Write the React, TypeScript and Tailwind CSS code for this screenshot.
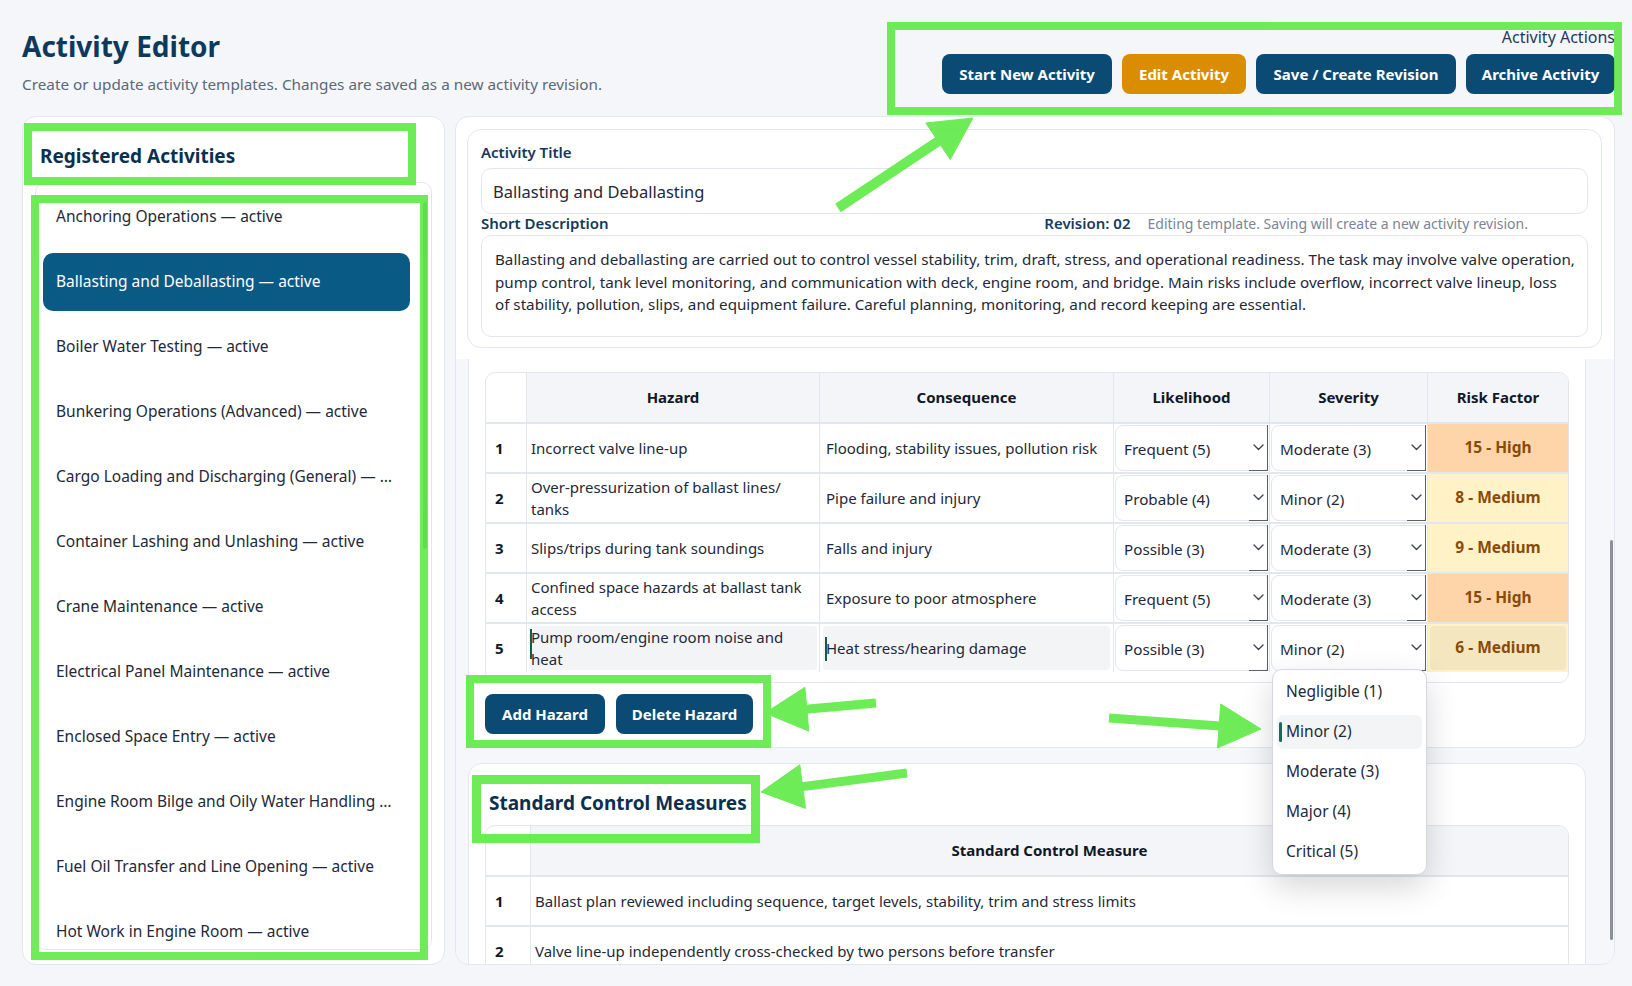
import React from 'react';

type Hazard = {
  no: number;
  hazard: string[];
  consequence: string;
  likelihood: string;
  severity: string;
  risk: string;
  level: 'high' | 'medium';
  editing?: boolean;
};

const activities = [
  'Anchoring Operations — active',
  'Ballasting and Deballasting — active',
  'Boiler Water Testing — active',
  'Bunkering Operations (Advanced) — active',
  'Cargo Loading and Discharging (General) — …',
  'Container Lashing and Unlashing — active',
  'Crane Maintenance — active',
  'Electrical Panel Maintenance — active',
  'Enclosed Space Entry — active',
  'Engine Room Bilge and Oily Water Handling …',
  'Fuel Oil Transfer and Line Opening — active',
  'Hot Work in Engine Room — active',
];

const hazards: Hazard[] = [
  { no: 1, hazard: ['Incorrect valve line-up'], consequence: 'Flooding, stability issues, pollution risk', likelihood: 'Frequent (5)', severity: 'Moderate (3)', risk: '15 - High', level: 'high' },
  { no: 2, hazard: ['Over-pressurization of ballast lines/', 'tanks'], consequence: 'Pipe failure and injury', likelihood: 'Probable (4)', severity: 'Minor (2)', risk: '8 - Medium', level: 'medium' },
  { no: 3, hazard: ['Slips/trips during tank soundings'], consequence: 'Falls and injury', likelihood: 'Possible (3)', severity: 'Moderate (3)', risk: '9 - Medium', level: 'medium' },
  { no: 4, hazard: ['Confined space hazards at ballast tank', 'access'], consequence: 'Exposure to poor atmosphere', likelihood: 'Frequent (5)', severity: 'Moderate (3)', risk: '15 - High', level: 'high' },
  { no: 5, hazard: ['Pump room/engine room noise and', 'heat'], consequence: 'Heat stress/hearing damage', likelihood: 'Possible (3)', severity: 'Minor (2)', risk: '6 - Medium', level: 'medium', editing: true },
];

const controls = [
  'Ballast plan reviewed including sequence, target levels, stability, trim and stress limits',
  'Valve line-up independently cross-checked by two persons before transfer',
];

const severityOptions = ['Negligible (1)', 'Minor (2)', 'Moderate (3)', 'Major (4)', 'Critical (5)'];

const description = [
  'Ballasting and deballasting are carried out to control vessel stability, trim, draft, stress, and operational readiness. The task may involve valve operation,',
  'pump control, tank level monitoring, and communication with deck, engine room, and bridge. Main risks include overflow, incorrect valve lineup, loss',
  'of stability, pollution, slips, and equipment failure. Careful planning, monitoring, and record keeping are essential.',
];

const Chevron = () => (
  <svg width="11" height="7" viewBox="0 0 11 7" fill="none">
    <path d="M1 1l4.5 4.5L10 1" stroke="#3f4652" strokeWidth="1.4" strokeLinecap="round" strokeLinejoin="round" />
  </svg>
);

const SelectBox = ({ value }: { value: string }) => (
  <div className="relative m-[1px] flex h-[46px] items-center rounded-l-[8px] rounded-r-[3px] border border-[#e2e6ee] bg-white pl-[8px] pt-[2px] text-[15.2px] text-[#1f2937]">
    <span>{value}</span>
    <div className="absolute bottom-[-1px] right-[-1px] flex h-[calc(100%+2px)] w-[19px] items-center justify-center border-b-[1.5px] border-r-[1.5px] border-[#5b5f66]">
      <Chevron />
    </div>
  </div>
);

const Button = ({ label, width, amber }: { label: string; width: string; amber?: boolean }) => (
  <button
    className={`${width} h-[40px] rounded-[8px] text-[15px] font-bold text-white ${amber ? 'bg-[#da8d00]' : 'bg-[#0b4a73]'}`}
  >
    {label}
  </button>
);

// annotation arrow: shaft plus a triangular head ending at (x2, y2)
const Arrow = ({ x1, y1, x2, y2, w = 9 }: { x1: number; y1: number; x2: number; y2: number; w?: number }) => {
  const dx = x2 - x1;
  const dy = y2 - y1;
  const len = Math.hypot(dx, dy);
  const ux = dx / len;
  const uy = dy / len;
  const bx = x2 - ux * 42;
  const by = y2 - uy * 42;
  const nx = -uy * 22;
  const ny = ux * 22;
  return (
    <g fill="#5fea45" stroke="#5fea45">
      <line x1={x1} y1={y1} x2={bx + ux * 4} y2={by + uy * 4} strokeWidth={w} />
      <polygon points={`${x2},${y2} ${bx + nx},${by + ny} ${bx - nx},${by - ny}`} strokeWidth={1} />
    </g>
  );
};

const cols = 'grid grid-cols-[41px_293px_294px_156px_158px_140px]';

export default function App() {
  return (
    <div className="relative h-[986px] w-[1632px] overflow-hidden bg-[#f4f6fa] font-['Noto_Sans',sans-serif] text-[#1f2937]">
      <div className="flex h-full flex-col pl-[22px] pr-[17px]">
        {/* page header */}
        <header className="flex h-[116px] shrink-0 justify-between">
          <div className="pt-[28px]">
            <h1 className="text-[28px] font-bold leading-[36px] text-[#0d3a5c]">Activity Editor</h1>
            <p className="mt-[9px] text-[15.3px] leading-[22px] text-[#5d6878]">
              Create or update activity templates. Changes are saved as a new activity revision.
            </p>
          </div>
          <div className="flex flex-col items-end pt-[27px]">
            <span className="text-[16px] leading-[20px] text-[#1e3a5f]">Activity Actions</span>
            <div className="mt-[7px] flex gap-[10px]">
              <Button label="Start New Activity" width="w-[170px]" />
              <Button label="Edit Activity" width="w-[124px]" amber />
              <Button label="Save / Create Revision" width="w-[200px]" />
              <Button label="Archive Activity" width="w-[149px]" />
            </div>
          </div>
        </header>

        <main className="flex h-[849px] gap-[10px]">
          {/* activity list */}
          <aside className="w-[423px] shrink-0 rounded-[14px] border border-[#e2e6ee] bg-white px-[12px] pt-[25px]">
            <h2 className="pl-[5px] text-[19px] font-bold leading-[28px] text-[#0c2f4e]">Registered Activities</h2>
            <div className="relative mt-[12px] h-[768px] overflow-hidden rounded-[10px] border border-[#e2e6ee] pl-[7px] pr-[21px] pt-[5px]">
              {activities.map((a, i) => (
                <div
                  key={a}
                  className={`mb-[7px] flex h-[58px] items-center overflow-hidden whitespace-nowrap rounded-[10px] px-[13px] text-[15.5px] ${
                    i === 1 ? 'bg-[#0a5a86] text-white' : 'text-[#1f2937]'
                  }`}
                >
                  {a}
                </div>
              ))}
              <div className="absolute right-[4px] top-[19px] h-[347px] w-[4px] rounded-full bg-[#6b7280]" />
            </div>
          </aside>

          {/* editor */}
          <section className="flex min-w-0 flex-1 flex-col overflow-hidden rounded-[14px] border border-[#e2e6ee] bg-white">
            <div className="ml-[11px] mr-[12px] mt-[12px] rounded-[14px] border border-[#e2e6ee] px-[13px] pb-[10px] pt-[12px]">
              <label className="block text-[15px] font-semibold leading-[20px] text-[#12385a]">Activity Title</label>
              <div className="mt-[6px] flex h-[46px] items-center rounded-[10px] border border-[#e2e6ee] px-[11px] pt-[3px] text-[16.5px] text-[#1f2937]">
                Ballasting and Deballasting
              </div>
              <div className="flex h-[18px] items-center justify-between pr-[60px]">
                <span className="text-[15px] font-semibold text-[#12385a]">Short Description</span>
                <div className="flex items-center gap-[17px]">
                  <span className="text-[15px] font-semibold text-[#1e3a5f]">Revision: 02</span>
                  <span className="text-[14px] text-[#7b8595]">Editing template. Saving will create a new activity revision.</span>
                </div>
              </div>
              <div className="mt-[3px] h-[102px] rounded-[10px] border border-[#e2e6ee] px-[13px] pt-[12px] text-[15.2px] leading-[22.5px] text-[#1f2937]">
                {description.map((l) => (
                  <div key={l} className="whitespace-nowrap">{l}</div>
                ))}
              </div>
            </div>

            <div className="relative mt-[11px] flex-1 overflow-hidden bg-[#f5f7fa] pl-[12px] pr-[28px]">
              {/* hazards */}
              <div className="rounded-b-[14px] border-x border-b border-[#e2e6ee] bg-white px-[16px] pb-[13px] pt-[13px]">
                <div className="overflow-hidden rounded-[10px] border border-[#e2e6ee] pb-[10px]">
                  <div className={`${cols} h-[49px] text-[15px] font-bold text-[#111827]`}>
                    <div className="border-r border-[#e2e6ee]" />
                    {['Hazard', 'Consequence', 'Likelihood', 'Severity', 'Risk Factor'].map((h, i) => (
                      <div
                        key={h}
                        className={`flex items-center justify-center bg-[#f3f5f9] ${i < 4 ? 'border-r border-[#e2e6ee]' : ''}`}
                      >
                        {h}
                      </div>
                    ))}
                  </div>
                  {hazards.map((h) => (
                    <div key={h.no} className={`${cols} h-[50px] border-t-2 border-[#e2e7ee] text-[15px]`}>
                      <div className="flex items-center border-r border-[#e2e6ee] pl-[9px] font-bold text-[#111827]">{h.no}</div>
                      <div className="flex items-center border-r border-[#e2e6ee] px-[2px]">
                        <div
                          className={`relative flex h-[44px] w-full flex-col justify-center rounded-[4px] pl-[2px] leading-[22px] ${
                            h.editing ? 'bg-[#f3f4f6]' : ''
                          }`}
                        >
                          {h.editing && <span className="absolute left-[1px] top-[3px] h-[30px] w-[2px] bg-[#0d5e4f]" />}
                          {h.hazard.map((t) => (
                            <span key={t} className="whitespace-nowrap">{t}</span>
                          ))}
                        </div>
                      </div>
                      <div className="flex items-center border-r border-[#e2e6ee] px-[3px]">
                        <div
                          className={`relative flex h-[44px] w-full items-center rounded-[4px] pl-[3px] ${h.editing ? 'bg-[#f3f4f6]' : ''}`}
                        >
                          {h.editing && <span className="absolute left-[2px] top-[11px] h-[24px] w-[2px] bg-[#0d5e4f]" />}
                          <span className="whitespace-nowrap">{h.consequence}</span>
                        </div>
                      </div>
                      <div className="border-r border-[#e2e6ee]">
                        <SelectBox value={h.likelihood} />
                      </div>
                      <div className="border-r border-[#e2e6ee]">
                        <SelectBox value={h.severity} />
                      </div>
                      <div
                        className={`flex items-center justify-center text-[15.5px] font-bold text-[#8a4a08] ${
                          h.level === 'high' ? 'bg-[#fdd5a8]' : 'bg-[#fef2c6]'
                        }`}
                      >
                        {h.editing ? (
                          <div className="m-[2px] flex h-[44px] w-full items-center justify-center rounded-[4px] bg-[#f4e7bf]">{h.risk}</div>
                        ) : (
                          h.risk
                        )}
                      </div>
                    </div>
                  ))}
                </div>
                <div className="mt-[11px] flex gap-[11px]">
                  <Button label="Add Hazard" width="w-[120px]" />
                  <Button label="Delete Hazard" width="w-[137px]" />
                </div>
              </div>

              {/* control measures */}
              <div className="mt-[15px] rounded-[14px] border border-[#e2e6ee] bg-white px-[16px] pb-[16px] pt-[26px]">
                <h3 className="pl-[4px] text-[19px] font-bold leading-[26px] text-[#0c2f4e]">Standard Control Measures</h3>
                <div className="mt-[9px] overflow-hidden rounded-[10px] border border-[#e2e6ee]">
                  <div className="grid h-[49px] grid-cols-[45px_1fr] text-[15px] font-bold text-[#111827]">
                    <div className="border-r border-[#e2e6ee]" />
                    <div className="flex items-center justify-center bg-[#f3f5f9]">Standard Control Measure</div>
                  </div>
                  {controls.map((c, i) => (
                    <div key={c} className="grid h-[50px] grid-cols-[45px_1fr] border-t-2 border-[#e2e7ee] text-[15px]">
                      <div className="flex items-center border-r border-[#e2e6ee] pl-[9px] font-bold text-[#111827]">{i + 1}</div>
                      <div className="flex items-center pl-[4px]">{c}</div>
                    </div>
                  ))}
                </div>
              </div>

              <div className="absolute right-[1px] top-[181px] h-[400px] w-[3px] rounded-full bg-[#8a8f98]" />
            </div>
          </section>
        </main>
      </div>

      {/* open severity menu */}
      <div className="absolute left-[1272px] top-[669px] w-[155px] rounded-[10px] border border-[#d4d8de] bg-white py-[2px] shadow-[0_12px_32px_rgba(0,0,0,0.16)]">
        {severityOptions.map((o) => (
          <div key={o} className="flex h-[40px] items-center px-[4px] text-[15.5px] text-[#1f2937]">
            <div className={`relative flex h-[34px] w-full items-center rounded-[6px] pl-[9px] ${o === 'Minor (2)' ? 'bg-[#f3f4f6]' : ''}`}>
              {o === 'Minor (2)' && <span className="absolute left-[2px] top-[7px] h-[20px] w-[3px] rounded-full bg-[#0f6e5c]" />}
              {o}
            </div>
          </div>
        ))}
      </div>

      {/* review markers */}
      <div className="pointer-events-none absolute inset-0 opacity-90">
        <div className="absolute left-[887px] top-[22px] h-[93px] w-[735px] border-[8px] border-[#5fea45]" />
        <div className="absolute left-[24px] top-[123px] h-[62px] w-[392px] border-[8px] border-[#5fea45]" />
        <div className="absolute left-[31px] top-[195px] h-[765px] w-[397px] border-[8px] border-[#5fea45]" />
        <div className="absolute left-[466px] top-[675px] h-[73px] w-[305px] border-[8px] border-[#5fea45]" />
        <div className="absolute left-[472px] top-[775px] h-[68px] w-[288px] border-[9px] border-[#5fea45]" />
        <svg className="absolute inset-0" width="1632" height="986">
          <Arrow x1={838} y1={208} x2={973} y2={118} w={10} />
          <Arrow x1={876} y1={703} x2={765} y2={713} />
          <Arrow x1={1109} y1={718} x2={1261} y2={729} />
          <Arrow x1={907} y1={773} x2={761} y2={792} />
        </svg>
      </div>
    </div>
  );
}
